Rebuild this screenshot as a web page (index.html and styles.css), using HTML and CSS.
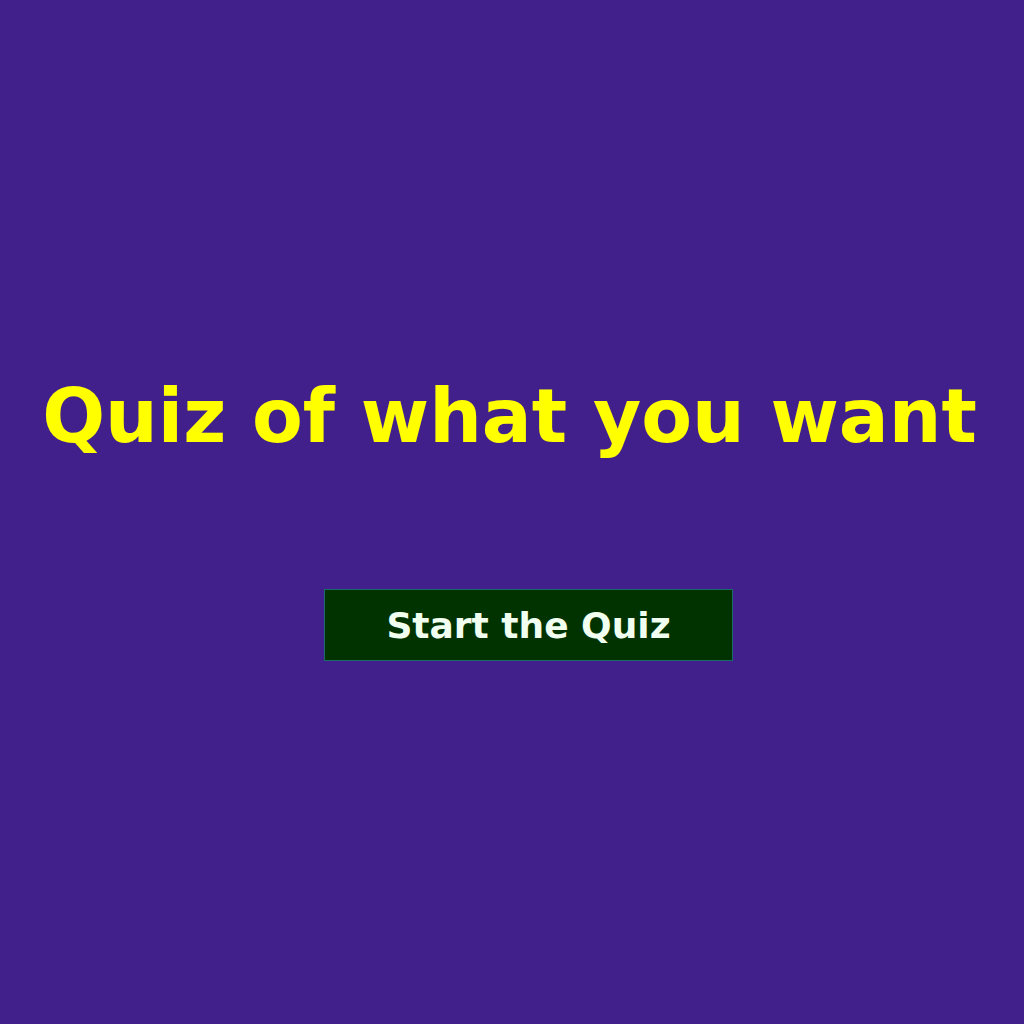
FILE: index.html
```html
<!DOCTYPE html>
<html>
<head>
<meta charset="utf-8">
<link rel="stylesheet" href="styles.css">
</head>
<body>
<main class="page">
  <h1 class="title">Quiz of what you want</h1>
  <button class="start">Start the Quiz</button>
</main>
</body>
</html>
```
FILE: styles.css
```css
html, body {
  margin: 0;
  padding: 0;
  height: 100%;
  background: #41208c;
}
.page {
  height: 100%;
  display: flex;
  flex-direction: column;
  align-items: center;
  font-family: "DejaVu Sans", sans-serif;
}
.title {
  margin: 371px 0 0 -5px;
  color: #ffff00;
  font-size: 74px;
  font-weight: bold;
  line-height: 90px;
  white-space: nowrap;
}
.start {
  margin: 128px 0 0 33px;
  width: 409px;
  height: 72px;
  background: #003300;
  border: 1px solid #1b6a6a;
  color: #f0fff0;
  font-family: "DejaVu Sans", sans-serif;
  font-weight: bold;
  font-size: 36px;
  padding: 0;
}
```
